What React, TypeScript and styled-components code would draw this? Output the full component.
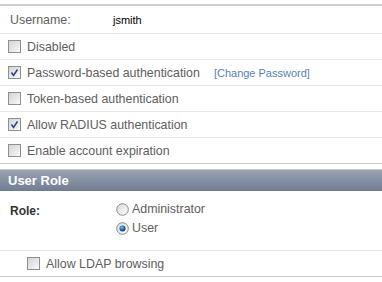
import styled, { createGlobalStyle } from "styled-components";

const GlobalStyle = createGlobalStyle`
  body {
    margin: 0;
    background: #fff;
    font-family: "Liberation Sans", Arial, sans-serif;
  }
`;

const Page = styled.div`
  width: 382px;
  padding-top: 4px;
`;

const Fields = styled.div`
  border-top: 2px solid #cfcfcf;
  border-bottom: 1px solid #c8c8c8;
`;

const Row = styled.div<{ $first?: boolean; $last?: boolean }>`
  display: flex;
  align-items: center;
  height: ${(p) => (p.$first ? 27 : 25)}px;
  padding-left: 8px;
  border-bottom: ${(p) => (p.$last ? "none" : "1px solid #e8e8e8")};
  font-size: 12.4px;
  color: #606060;
`;

const Label = styled.span`
  width: 103px;
  padding-left: 2px;
`;

const Value = styled.span`
  font-size: 11px;
  color: #000;
`;

const CheckText = styled.span`
  margin-left: 6px;
`;

const Link = styled.a`
  margin-left: 14px;
  font-size: 11px;
  color: #5a7fb8;
  text-decoration: none;
`;

const SectionHeader = styled.div`
  margin-top: 5px;
  height: 21px;
  display: flex;
  align-items: center;
  padding-left: 8px;
  border-top: 1px solid #c4c8cf;
  background: linear-gradient(#98a2b3, #717c91);
  color: #fff;
  font-weight: bold;
  font-size: 13px;
`;

const RoleRow = styled.div`
  display: flex;
  padding: 10px 0 14px 10px;
  border-bottom: 1px solid #e4e4e4;
`;

const RoleLabel = styled.span`
  width: 106px;
  font-size: 12px;
  font-weight: bold;
  color: #333;
  padding-top: 3px;
`;

const RadioList = styled.div`
  display: flex;
  flex-direction: column;
  gap: 3px;
`;

const RadioItem = styled.label`
  display: flex;
  align-items: center;
  gap: 3px;
  height: 16px;
  font-size: 12.4px;
  color: #606060;
`;

const SubRow = styled.div`
  display: flex;
  align-items: center;
  height: 25px;
  padding-left: 27px;
  border-bottom: 1px solid #c8c8c8;
  font-size: 12.4px;
  color: #606060;
`;

const Box = styled.span`
  display: inline-flex;
  width: 11px;
  height: 11px;
  border: 1px solid #8e8f8f;
  background: linear-gradient(135deg, #d4d4d4, #efefef 75%, #fff);
  flex-shrink: 0;
`;

function CheckBox({ checked }: { checked?: boolean }) {
  return (
    <Box>
      {checked && (
        <svg width="11" height="11" viewBox="0 0 11 11">
          <path d="M2.5 5.5 L4.5 8.5 L8.5 2.5" fill="none" stroke="#2b3f93" strokeWidth="1.5" />
        </svg>
      )}
    </Box>
  );
}

function Radio({ checked }: { checked?: boolean }) {
  return (
    <svg width="13" height="13" viewBox="0 0 13 13">
      <defs>
        <linearGradient id="rg" x1="0" y1="0" x2="1" y2="1">
          <stop offset="0" stopColor="#d8d8d8" />
          <stop offset="1" stopColor="#fdfdfd" />
        </linearGradient>
        <radialGradient id="dot" cx="0.4" cy="0.35" r="0.7">
          <stop offset="0" stopColor="#7fc3ee" />
          <stop offset="0.6" stopColor="#1a62a8" />
          <stop offset="1" stopColor="#0d2c55" />
        </radialGradient>
      </defs>
      <circle cx="6.5" cy="6.5" r="5.8" fill="url(#rg)" stroke="#8a8a8a" strokeWidth="1" />
      {checked && <circle cx="6.5" cy="6.5" r="3" fill="url(#dot)" />}
    </svg>
  );
}

export default function App() {
  return (
    <Page>
      <GlobalStyle />
      <Fields>
        <Row $first>
          <Label>Username:</Label>
          <Value>jsmith</Value>
        </Row>
        <Row>
          <CheckBox />
          <CheckText>Disabled</CheckText>
        </Row>
        <Row>
          <CheckBox checked />
          <CheckText>Password-based authentication</CheckText>
          <Link href="#">[Change Password]</Link>
        </Row>
        <Row>
          <CheckBox />
          <CheckText>Token-based authentication</CheckText>
        </Row>
        <Row>
          <CheckBox checked />
          <CheckText>Allow RADIUS authentication</CheckText>
        </Row>
        <Row $last>
          <CheckBox />
          <CheckText>Enable account expiration</CheckText>
        </Row>
      </Fields>
      <SectionHeader>User Role</SectionHeader>
      <RoleRow>
        <RoleLabel>Role:</RoleLabel>
        <RadioList>
          <RadioItem>
            <Radio />
            Administrator
          </RadioItem>
          <RadioItem>
            <Radio checked />
            User
          </RadioItem>
        </RadioList>
      </RoleRow>
      <SubRow>
        <CheckBox />
        <CheckText>Allow LDAP browsing</CheckText>
      </SubRow>
    </Page>
  );
}
